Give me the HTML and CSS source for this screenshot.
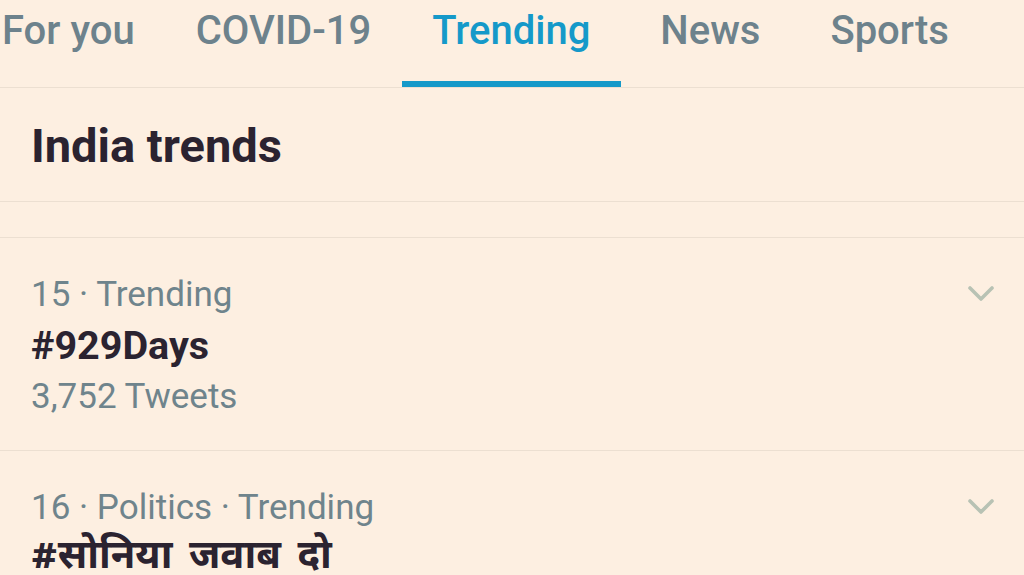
FILE: index.html
```html
<!DOCTYPE html>
<html lang="en">
<head>
<meta charset="utf-8">
<link rel="stylesheet" href="styles.css">
</head>
<body>
<div class="page">
  <nav class="tabs">
    <div class="tab first">For you</div>
    <div class="tab">COVID-19</div>
    <div class="tab active">Trending</div>
    <div class="tab spaced">News</div>
    <div class="tab spaced">Sports</div>
  </nav>
  <section class="heading">
    <h1>India trends</h1>
  </section>
  <div class="spacer"></div>
  <article class="trend">
    <div class="trend-text">
      <div class="meta">15 · Trending</div>
      <div class="tag">#929Days</div>
      <div class="meta">3,752 Tweets</div>
    </div>
    <svg class="chev" width="26" height="16" viewBox="0 0 26 16"><path d="M2 2 L13 13 L24 2" fill="none" stroke="#b8c2b4" stroke-width="3.6" stroke-linecap="round" stroke-linejoin="round"/></svg>
  </article>
  <article class="trend">
    <div class="trend-text">
      <div class="meta">16 · Politics · Trending</div>
      <div class="tag hi">#सोनिया जवाब दो</div>
    </div>
    <svg class="chev" width="26" height="16" viewBox="0 0 26 16"><path d="M2 2 L13 13 L24 2" fill="none" stroke="#b8c2b4" stroke-width="3.6" stroke-linecap="round" stroke-linejoin="round"/></svg>
  </article>
</div>
</body>
</html>
```
FILE: styles.css
```css
* { box-sizing: border-box; margin: 0; padding: 0; }
html, body { background: #fdefe1; }
body {
  font-family: Roboto, "Noto Sans", "Noto Sans Devanagari", "Lohit Devanagari", sans-serif;
  overflow: hidden;
  width: 1024px;
  height: 575px;
}
.page { width: 1024px; }

.tabs {
  display: flex;
  height: 88px;
  border-bottom: 1px solid #ecdfd1;
  overflow: hidden;
}
.tab {
  position: relative;
  padding: 7px 31px 0 30px;
  height: 87px;
  font-size: 40px;
  line-height: 48px;
  font-weight: 500;
  color: #6d828c;
  white-space: nowrap;
}
.tab.first { margin-left: -28px; }
.tab.spaced { margin-left: 9px; }
.tab.active { color: #1599c9; }
.tab.active::after {
  content: "";
  position: absolute;
  left: 0; right: 0; bottom: -1px;
  height: 7px;
  background: #1599c9;
}

.heading {
  height: 114px;
  padding: 30px 31px 0;
  border-bottom: 1px solid #ecdfd1;
}
.heading h1 {
  font-size: 47px;
  line-height: 56px;
  font-weight: 700;
  color: #2b2330;
}

.spacer {
  height: 36px;
  border-bottom: 1px solid #ecdfd1;
}

.trend {
  display: flex;
  justify-content: space-between;
  align-items: flex-start;
  padding: 31px 30px 28px 31px;
  border-bottom: 1px solid #ecdfd1;
}
.meta {
  font-size: 35px;
  line-height: 51px;
  color: #6f848c;
}
.tag {
  font-size: 39.5px;
  line-height: 51px;
  font-weight: 700;
  color: #2b2330;
}
.tag.hi {
  font-family: "Noto Sans Devanagari", "Lohit Devanagari", "Noto Sans", sans-serif;
  font-size: 40px;
  word-spacing: 6px;
}
.chev { margin-top: 17px; }
```
